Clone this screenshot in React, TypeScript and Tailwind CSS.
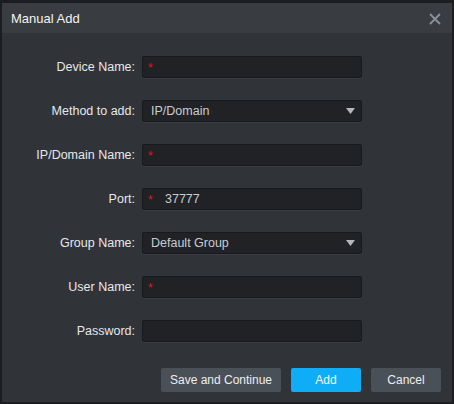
import React from 'react';

// ============= Types =============
type Field = {
  label: string;
  kind: 'text' | 'select';
  required?: boolean;
  value?: string;
};

// ============= Constants =============
const FIELDS: Field[] = [
  { label: 'Device Name:', kind: 'text', required: true },
  { label: 'Method to add:', kind: 'select', value: 'IP/Domain' },
  { label: 'IP/Domain Name:', kind: 'text', required: true },
  { label: 'Port:', kind: 'text', required: true, value: '37777' },
  { label: 'Group Name:', kind: 'select', value: 'Default Group' },
  { label: 'User Name:', kind: 'text', required: true },
  { label: 'Password:', kind: 'text' },
];

// ============= Components =============
const Asterisk = () => (
  <span className="text-[#d81e1e] text-[12px] leading-none mt-[1px]">*</span>
);

const FieldRow = ({ field }: { field: Field }) => (
  <div className="flex items-center h-[22px]">
    <label className="w-[133px] text-right text-[12.5px] text-[#e6e8eb]">{field.label}</label>
    <div className="ml-[7px] w-[220px] h-[22px] flex items-center bg-[#202226] border border-[#18191c] rounded-[2px] shadow-[0_1px_0_#3a3d42]">
      {field.kind === 'select' ? (
        <>
          <span className="pl-[8px] flex-1 text-[12.5px] text-[#c9cdd2]">{field.value}</span>
          <svg width="9" height="6" viewBox="0 0 9 6" className="mr-[6px]">
            <path d="M0 0 H9 L4.5 6 Z" fill="#b4b8be" />
          </svg>
        </>
      ) : (
        <>
          <span className="pl-[5px] w-[22px] flex">{field.required && <Asterisk />}</span>
          {field.value && <span className="text-[12.5px] text-[#c9cdd2]">{field.value}</span>}
        </>
      )}
    </div>
  </div>
);

// ============= Main Component =============
export default function App() {
  return (
    <div
      className="w-[454px] h-[404px] flex flex-col bg-[#303338] border-2 border-t-[3px] border-[#1c1d20]"
      style={{ fontFamily: '"Liberation Sans", Arial, sans-serif' }}
    >
      {/* Title bar */}
      <div className="h-[30px] shrink-0 flex items-center justify-between bg-[#393c41] pl-[9px] pr-[11px] pt-[2px]">
        <span className="text-[13px] text-[#f2f3f5]">Manual Add</span>
        <svg width="12" height="12" viewBox="0 0 12 12">
          <path d="M1 1 L11 11 M11 1 L1 11" stroke="#8c9198" strokeWidth="1.8" />
        </svg>
      </div>

      {/* Form */}
      <div className="flex flex-col gap-[22px] pt-[23px]">
        {FIELDS.map((f) => (
          <FieldRow key={f.label} field={f} />
        ))}
      </div>

      {/* Footer */}
      <div className="flex justify-end gap-[10px] mt-[26px] pr-[11px]">
        <button className="w-[120px] h-[24px] bg-[#4a5058] rounded-[2px] text-[12px] text-[#eceef0]">Save and Continue</button>
        <button className="w-[70px] h-[24px] bg-[#0eadf6] rounded-[2px] text-[12px] text-[#eef8ff]">Add</button>
        <button className="w-[70px] h-[24px] bg-[#4a5058] rounded-[2px] text-[12px] text-[#eceef0]">Cancel</button>
      </div>
    </div>
  );
}
